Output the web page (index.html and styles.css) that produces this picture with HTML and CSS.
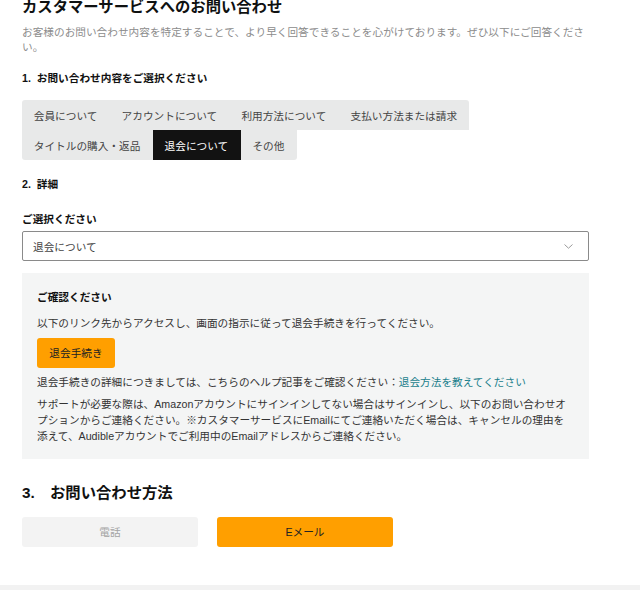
FILE: index.html
```html
<!DOCTYPE html>
<html lang="ja">
<head>
<meta charset="utf-8">
<title>カスタマーサービスへのお問い合わせ</title>
<link rel="stylesheet" href="styles.css">
</head>
<body>
<main class="page">
  <h1 class="title">カスタマーサービスへのお問い合わせ</h1>
  <p class="lead">お客様のお問い合わせ内容を特定することで、より早く回答できることを心がけております。ぜひ以下にご回答ください。</p>

  <h2 class="step">1.&nbsp; お問い合わせ内容をご選択ください</h2>
  <div class="tabs">
    <div class="tab-row">
      <span class="tab">会員について</span>
      <span class="tab">アカウントについて</span>
      <span class="tab">利用方法について</span>
      <span class="tab">支払い方法または請求</span>
    </div>
    <div class="tab-row">
      <span class="tab">タイトルの購入・返品</span>
      <span class="tab tab-active">退会について</span>
      <span class="tab">その他</span>
    </div>
  </div>

  <h2 class="step step-2">2.&nbsp; 詳細</h2>
  <div class="field-label">ご選択ください</div>
  <div class="select">
    <span>退会について</span>
    <svg class="chev" width="9" height="5" viewBox="0 0 9 5"><path d="M0.5 0.5 L4.5 4.2 L8.5 0.5" fill="none" stroke="#9a9a9a" stroke-width="1"/></svg>
  </div>

  <section class="info">
    <h3 class="info-title">ご確認ください</h3>
    <p class="info-text">以下のリンク先からアクセスし、画面の指示に従って退会手続きを行ってください。</p>
    <button class="btn-cancel" type="button">退会手続き</button>
    <p class="info-text">退会手続きの詳細につきましては、こちらのヘルプ記事をご確認ください：<a class="link" href="#">退会方法を教えてください</a></p>
    <p class="info-text">サポートが必要な際は、Amazonアカウントにサインインしてない場合はサインインし、以下のお問い合わせオプションからご連絡ください。※カスタマーサービスにEmailにてご連絡いただく場合は、キャンセルの理由を添えて、Audibleアカウントでご利用中のEmailアドレスからご連絡ください。</p>
  </section>

  <h2 class="step-big"><span class="num">3.</span>お問い合わせ方法</h2>
  <div class="methods">
    <button class="method method-off" type="button">電話</button>
    <button class="method method-on" type="button">Eメール</button>
  </div>
</main>
<footer class="footer"></footer>
</body>
</html>
```

FILE: styles.css
```css
* { box-sizing: border-box; }
html, body { margin: 0; padding: 0; background: #fff; }
body {
  font-family: "Liberation Sans", "Noto Sans CJK JP", sans-serif;
  font-size: 10.67px;
  color: #333;
  height: 590px;
  overflow: hidden;
  display: flex;
  flex-direction: column;
}
.page {
  width: 567px;
  margin-left: 22px;
  flex: 1;
}
.title {
  margin: -4px 0 0;
  font-size: 15.33px;
  line-height: 22px;
  font-weight: 700;
  color: #0f1111;
}
.lead {
  margin: 7px 0 0;
  line-height: 15px;
  color: #8c8c8c;
}
.step {
  margin: 15px 0 0;
  font-size: 10.67px;
  line-height: 16px;
  font-weight: 700;
  color: #111;
}
.step-2 { margin-top: 16px; }
.tabs {
  margin-top: 14px;
  display: flex;
  flex-direction: column;
  align-items: flex-start;
}
.tab-row {
  display: flex;
  background: #e8e9e9;
}
.tab-row:first-child { border-radius: 3px 3px 0 0; }
.tab-row:last-child { border-radius: 0 0 3px 3px; }
.tab {
  height: 30px;
  padding: 0 12.4px 0 11.8px;
  display: flex;
  align-items: center;
  color: #444;
  white-space: nowrap;
}
.tab-active {
  background: #121212;
  color: #fff;
}
.field-label {
  margin-top: 19px;
  line-height: 16px;
  font-weight: 700;
  color: #111;
}
.select {
  margin-top: 4px;
  height: 30px;
  border: 1px solid #8a8a8a;
  border-radius: 2px;
  display: flex;
  align-items: center;
  justify-content: space-between;
  padding: 0 15px 0 10px;
  color: #444;
}
.chev { display: block; }
.info {
  margin-top: 12px;
  background: #f4f5f5;
  padding: 16px 15px 15px;
}
.info-title {
  margin: 0;
  font-size: 10.67px;
  line-height: 16px;
  font-weight: 700;
  color: #111;
}
.info-text {
  margin: 6px 0 0;
  line-height: 16px;
  color: #333;
}
.info-title + .info-text { margin-top: 10px; }
.btn-cancel {
  margin-top: 6.5px;
  height: 30px;
  width: 78px;
  border: 0;
  border-radius: 3px;
  background: #ff9f00;
  color: #222;
  font: inherit;
  display: block;
  padding: 0;
}
.link { color: #1b7f8c; text-decoration: none; }
.step-big {
  margin: 22px 0 0;
  font-size: 15.33px;
  line-height: 23px;
  font-weight: 700;
  color: #111;
  display: flex;
}
.num { width: 28px; }
.methods {
  margin-top: 13px;
  display: flex;
  gap: 19px;
}
.method {
  width: 176px;
  height: 30px;
  border: 0;
  border-radius: 3px;
  font: inherit;
  padding: 0;
}
.method-off { background: #f3f3f3; color: #a3a3a3; }
.method-on { background: #ff9f00; color: #222; }
.footer {
  height: 5px;
  background: #f2f2f2;
  flex: none;
}
```
